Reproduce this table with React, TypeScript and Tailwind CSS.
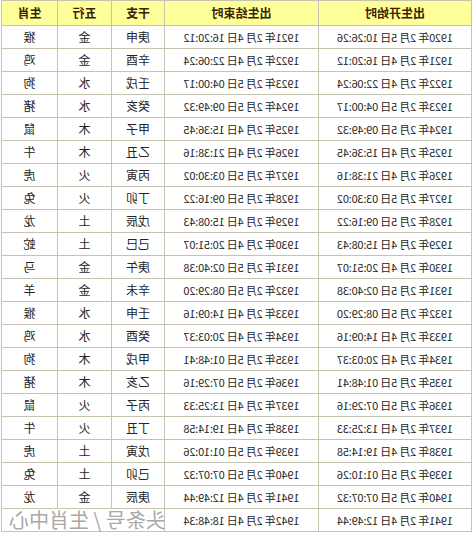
import React from "react";

const rows: [string, string, string, string, string][] = [
  ["1920年 2月 5日 10:26:26", "1921年 2月 4日 16:20:12", "庚申", "金", "猴"],
  ["1921年 2月 4日 16:20:12", "1922年 2月 4日 22:06:24", "辛酉", "金", "鸡"],
  ["1922年 2月 4日 22:06:24", "1923年 2月 5日 04:00:17", "壬戌", "水", "狗"],
  ["1923年 2月 5日 04:00:17", "1924年 2月 5日 09:49:32", "癸亥", "水", "猪"],
  ["1924年 2月 5日 09:49:32", "1925年 2月 4日 15:36:45", "甲子", "木", "鼠"],
  ["1925年 2月 4日 15:36:45", "1926年 2月 4日 21:38:16", "乙丑", "木", "牛"],
  ["1926年 2月 4日 21:38:16", "1927年 2月 5日 03:30:02", "丙寅", "火", "虎"],
  ["1927年 2月 5日 03:30:02", "1928年 2月 5日 09:16:22", "丁卯", "火", "兔"],
  ["1928年 2月 5日 09:16:22", "1929年 2月 4日 15:08:43", "戊辰", "土", "龙"],
  ["1929年 2月 4日 15:08:43", "1930年 2月 4日 20:51:07", "己巳", "土", "蛇"],
  ["1930年 2月 4日 20:51:07", "1931年 2月 5日 02:40:38", "庚午", "金", "马"],
  ["1931年 2月 5日 02:40:38", "1932年 2月 5日 08:29:20", "辛未", "金", "羊"],
  ["1932年 2月 5日 08:29:20", "1933年 2月 4日 14:09:16", "壬申", "水", "猴"],
  ["1933年 2月 4日 14:09:16", "1934年 2月 4日 20:03:37", "癸酉", "水", "鸡"],
  ["1934年 2月 4日 20:03:37", "1935年 2月 5日 01:48:41", "甲戌", "木", "狗"],
  ["1935年 2月 5日 01:48:41", "1936年 2月 5日 07:29:16", "乙亥", "木", "猪"],
  ["1936年 2月 5日 07:29:16", "1937年 2月 4日 13:25:33", "丙子", "火", "鼠"],
  ["1937年 2月 4日 13:25:33", "1938年 2月 4日 19:14:58", "丁丑", "火", "牛"],
  ["1938年 2月 4日 19:14:58", "1939年 2月 5日 01:10:26", "戊寅", "土", "虎"],
  ["1939年 2月 5日 01:10:26", "1940年 2月 5日 07:07:32", "己卯", "土", "兔"],
  ["1940年 2月 5日 07:07:32", "1941年 2月 4日 12:49:44", "庚辰", "金", "龙"],
];

const last: [string, string] = ["1941年 2月 4日 12:49:44", "1942年 2月 4日 18:48:34"];

const cell = "border border-[#c4c4b0] text-center align-middle p-0";

export default function App() {
  return (
    <div
      className="w-[474px] h-[539px] bg-white overflow-hidden -scale-x-100"
      style={{ fontFamily: '"Noto Sans CJK SC", "Liberation Sans", sans-serif' }}
    >
      <div className="px-[2px]">
        <table className="w-[470px] border-collapse table-fixed text-[11px] text-[#262626] leading-none">
          <colgroup>
            <col className="w-[153px]" />
            <col className="w-[154px]" />
            <col className="w-[53px]" />
            <col className="w-[54px]" />
            <col className="w-[56px]" />
          </colgroup>
          <thead>
            <tr className="h-[25px] bg-[#ffff99]">
              {["出生开始时", "出生结束时", "干支", "五行", "生肖"].map((h) => (
                <th key={h} className={`${cell} font-bold text-[12px] text-[#3a2400]`}>
                  {h}
                </th>
              ))}
            </tr>
          </thead>
          <tbody>
            {rows.map((r, i) => (
              <tr key={i} className="h-[23px]">
                <td className={`${cell} tracking-[-0.2px]`}>{r[0]}</td>
                <td className={`${cell} tracking-[-0.2px]`}>{r[1]}</td>
                <td className={`${cell} text-[12px]`}>{r[2]}</td>
                <td className={`${cell} text-[12px]`}>{r[3]}</td>
                <td className={`${cell} text-[12px]`}>{r[4]}</td>
              </tr>
            ))}
            <tr className="h-[23px]">
              <td className={`${cell} tracking-[-0.2px]`}>{last[0]}</td>
              <td className={`${cell} tracking-[-0.2px]`}>{last[1]}</td>
              <td colSpan={3} className="border-y border-r border-[#c4c4b0] p-0 align-middle overflow-visible">
                <div className="flex justify-end pr-[7px] -ml-[12px]">
                  <span className="text-[20px] leading-none text-[#a8a8a8] whitespace-nowrap">
                    头条号 / 生肖中心
                  </span>
                </div>
              </td>
            </tr>
          </tbody>
        </table>
      </div>
    </div>
  );
}
